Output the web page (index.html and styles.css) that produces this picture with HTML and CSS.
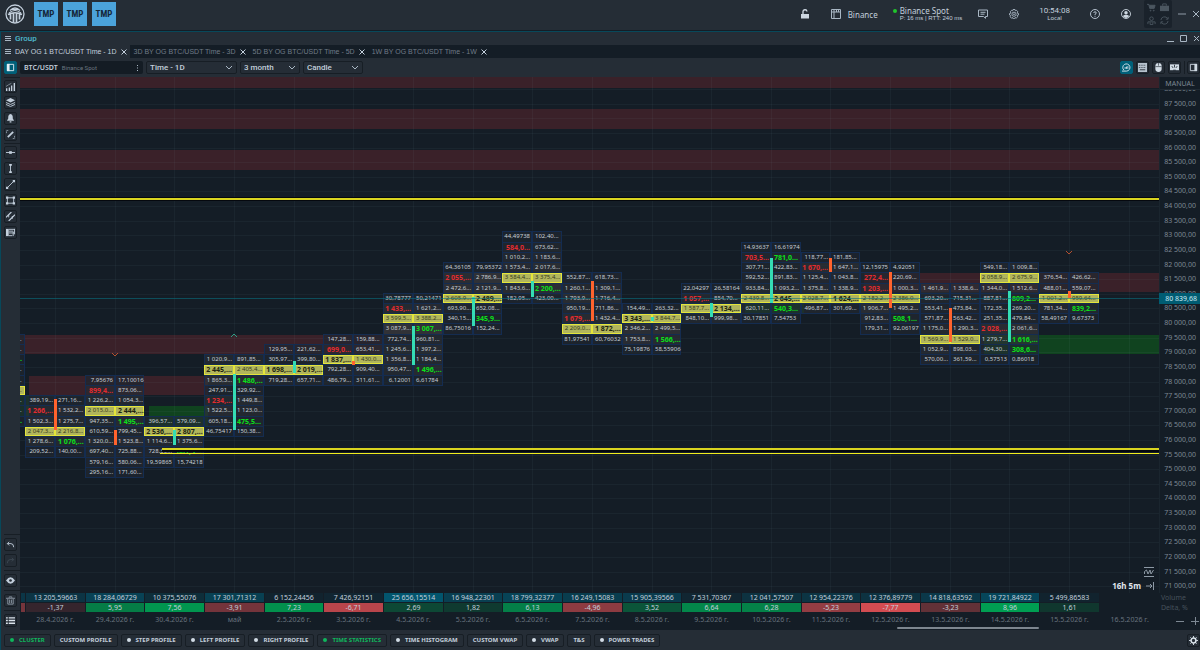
FILE: index.html
```html
<!DOCTYPE html>
<html lang="en">
<head>
    <meta charset="UTF-8">
    <meta name="viewport" content="width=device-width, initial-scale=1.0">
    <title>BTC/USDT Cluster Chart</title>
    <link rel="stylesheet" href="styles.css">
</head>
<body>

<!-- Top bar -->
<header class="topbar">
    <svg class="logo" viewBox="0 0 20 20" fill="none" stroke="#c3cfdc">
        <circle cx="10" cy="10" r="9" stroke-width="1.3"/>
        <path d="M5 6.5Q10 1.500 15 6.500M4 9Q10 4 16 9M6.500 5.500h7" stroke-width="1.2"/>
        <path d="M3 10.500Q10 7 17 10.500M5.500 10v5.500M8.500 9.500v8.500M11.500 9.500v8.500M14.500 10v5.500" stroke-width="1.7"/>
    </svg>
    <button class="tmp">TMP</button>
    <button class="tmp">TMP</button>
    <button class="tmp">TMP</button>
    <div class="topbar-right">
        <button class="top-icon" aria-label="Lock"><svg viewBox="0 0 10 10"><path d="M1 5h8v4.500H1z" fill="#ccd6e0"/><path d="M3 5V3a2 2 0 0 1 4-.5" fill="none" stroke="#ccd6e0" stroke-width="1.300"/></svg></button>
        <button class="exchange"><svg viewBox="0 0 10 10" fill="none" stroke="#a9b7c4"><path d="M.5.500h9v9h-9zM.5 3h9M3 .5v9M5.500.500v2.500M7.500.500v2.500"/></svg>Binance</button>
        <div class="connection">
            <span class="online"></span>
            <div><strong>Binance Spot</strong><small>P: 16 ms | RTT: 240 ms</small></div>
        </div>
        <button class="top-icon" aria-label="Messages"><svg viewBox="0 0 10 10" fill="none" stroke="#a9b7c4"><path d="M.5 1h9v6.500H7.500V9.300L5.500 7.500H.5zM2.500 3.300h5M2.500 5.200h4"/></svg></button>
        <button class="top-icon gear" aria-label="Settings"><svg viewBox="0 0 20 20" fill="none" stroke="#a9b7c4" stroke-width="1.8"><path d="M8 1h4l.7 2.500 2.500-.800 2.500 3L16 8l3 1v3l-3 1 1.500 2.500-3 2.500-2.200-1-.8 2.500H8l-.8-2.500-2.200 1-3-2.500L3.500 13 1 12V9l3-1-1.500-2.300 2.500-3 2.300.800z"/><circle cx="10" cy="10.500" r="4.200"/><circle cx="10" cy="10.500" r="1"/></svg></button>
        <div class="clock"><span>10:54:08</span><small>Local</small></div>
        <button class="top-icon" aria-label="Help"><svg viewBox="0 0 20 20" fill="none" stroke="#c3cfdc" stroke-width="1.8"><circle cx="10" cy="10" r="9"/><path d="M7.500 8q0-2.500 2.500-2.500T12.500 8q0 1.300-2.500 2.500v1.500M10 13.500v2"/></svg></button>
        <button class="top-icon" aria-label="Account"><svg viewBox="0 0 20 20"><circle cx="10" cy="10" r="9" fill="none" stroke="#ccd6e0" stroke-width="1.8"/><circle cx="10" cy="7.500" r="3.500" fill="#ccd6e0"/><path d="M3.500 14q6.500-5 13 0-6.500 8-13 0z" fill="#ccd6e0"/></svg></button>
        <div class="quick">
            <svg viewBox="0 0 10 10" fill="#4b5660" stroke="#4b5660"><path d="M0 1.500h2l1 4.500h5l1-3.500H2.500" /><circle cx="4" cy="8.500" r=".5"/><circle cx="7.500" cy="8.500" r=".5"/></svg>
            <svg viewBox="0 0 10 10" fill="#4b5660"><path d="M0 3h10v6H0z"/><path d="M3 3V1h4v2" fill="none" stroke="#4b5660"/></svg>
            <svg viewBox="0 0 10 10" fill="none" stroke="#4b5660"><circle cx="5" cy="3" r="2"/><path d="M1 9V6.500h8V9M3.500 7v2.500h3V7"/></svg>
            <svg viewBox="0 0 10 10" fill="none" stroke="#4b5660"><path d="M1 4.500A4 4 0 0 1 8.500 3M9 1v2.500H6.500M9 5.500A4 4 0 0 1 1.500 7M1 9V6.500h2.500"/></svg>
        </div>
        <button class="win" aria-label="Minimize"><svg viewBox="0 0 8 8" stroke="#909ba6"><path d="M0 4h8"/></svg></button>
        <button class="win" aria-label="Close"><svg viewBox="0 0 8 8" stroke="#a9b7c4"><path d="M1 1l6 6M7 1L1 7"/></svg></button>
    </div>
</header>

<main class="window">
    <div class="group-bar">
        <svg class="burger" viewBox="0 0 6 6" stroke="#a9b7c4"><path d="M0 .5h6M0 2.500h6M0 4.500h6"/></svg>
        <span class="group-name">Group</span>
        <button class="win-small" aria-label="Minimize group"><svg viewBox="0 0 7 7" stroke="#a9b7c4"><path d="M0 6.500h7"/></svg></button>
        <button class="win-small" aria-label="Maximize group"><svg viewBox="0 0 7 7" fill="none" stroke="#a9b7c4"><path d="M.5.500h6v6h-6z"/></svg></button>
        <button class="win-small" aria-label="Close group"><svg viewBox="0 0 7 7" stroke="#a9b7c4"><path d="M1 1l5 5M6 1L1 6"/></svg></button>
    </div>

    <nav class="tabs">
        <div class="tab active">
            <svg class="burger" viewBox="0 0 6 6" stroke="#a9b7c4"><path d="M0 .5h6M0 2.500h6M0 4.500h6"/></svg>
            <a href="#">DAY OG 1 BTC/USDT Time - 1D</a><button aria-label="Close tab"><svg viewBox="0 0 6 6"><path d="M.5.500l5 5M5.500.500l-5 5"/></svg></button>
        </div>
        <div class="tab"><a href="#">3D BY OG BTC/USDT Time - 3D</a><button aria-label="Close tab"><svg viewBox="0 0 6 6"><path d="M.5.500l5 5M5.500.500l-5 5"/></svg></button></div>
        <div class="tab"><a href="#">5D BY OG BTC/USDT Time - 5D</a><button aria-label="Close tab"><svg viewBox="0 0 6 6"><path d="M.5.500l5 5M5.500.500l-5 5"/></svg></button></div>
        <div class="tab"><a href="#">1W BY OG BTC/USDT Time - 1W</a><button aria-label="Close tab"><svg viewBox="0 0 6 6"><path d="M.5.500l5 5M5.500.500l-5 5"/></svg></button></div>
    </nav>

    <div class="toolbar">
        <button class="tool on" aria-label="Toggle left panel"><svg viewBox="0 0 10 10"><path d="M1.500 1.500h7v7h-7z" fill="none" stroke="#e3edf4"/><path d="M1 1h3v8H1z" fill="#e3edf4"/></svg></button>
        <button class="symbol"><strong>BTC/USDT</strong><span>Binance Spot</span><svg viewBox="0 0 2 8" fill="#a9b7c4"><path d="M0 1h1v1H0zM0 3.500h1v1H0zM0 6h1v1H0z"/></svg></button>
        <label class="pick pick-time"><select aria-label="Timeframe"><option>Time - 1D</option></select><svg viewBox="0 0 8 5"><path d="M1 1l3 3 3-3"/></svg></label>
        <label class="pick"><select aria-label="Period"><option>3 month</option></select><svg viewBox="0 0 8 5"><path d="M1 1l3 3 3-3"/></svg></label>
        <label class="pick"><select aria-label="Chart type"><option>Candle</option></select><svg viewBox="0 0 8 5"><path d="M1 1l3 3 3-3"/></svg></label>
        <div class="toolbar-right">
            <button class="tool on" aria-label="Inspect"><svg viewBox="0 0 10 10" fill="none" stroke="#dbe8ef"><path d="M2.200 8A4 4 0 1 1 5 9H0"/><path d="M3.500 6.500v-2M5 6.500V4M6.500 6.500v-3"/></svg></button>
            <button class="tool" aria-label="Keyboard"><svg viewBox="0 0 10 10"><path d="M0 0h10v10H0z" fill="#b6c2cd"/><path d="M1 2.500h8M1 5h8" stroke="#2b333c" stroke-dasharray="1 1"/><path d="M2 7.500h6" stroke="#2b333c"/></svg></button>
            <button class="tool" aria-label="Mouse"><svg viewBox="0 0 10 10"><rect x="1.500" y="0" width="7" height="10" rx="3.500" fill="#d2dce5"/><path d="M1.500 4h7M5 0v3" stroke="#252d36" stroke-width=".7"/></svg></button>
            <button class="tool" aria-label="Templates"><svg viewBox="0 0 10 10"><path d="M0 1.500h10v6.500H0z" fill="#d2dce5"/><path d="M2 3.500l1.500 2M5 2v3M8 3.500L6.500 5.500M3.500 8h3" stroke="#252d36"/></svg></button>
            <span class="split"></span>
            <button class="tool" aria-label="Toggle right panel"><svg viewBox="0 0 10 10"><path d="M1.500 1.500h7v7h-7z" fill="none" stroke="#d2dce5"/><path d="M6 1h3v8H6z" fill="#d2dce5"/></svg></button>
        </div>
    </div>

    <div class="workspace">
        <aside class="sidebar">
            <div class="tools tools-top">
                <button class="tool" aria-label="Indicators"><svg viewBox="0 0 10 10" fill="#c3cfdc"><path d="M0 7h1.500v3H0zM3 6h1.500v4H3zM5.500 4h1.500v6H5.500zM8.500 1H10v9H8.500z"/><path d="M0 5l3-2 3-1.500" fill="none" stroke="#7f8b96"/></svg></button>
                <button class="tool" aria-label="Layers"><svg viewBox="0 0 10 10"><path d="M5 0l5 2.500L5 5 0 2.500z" fill="#c3cfdc"/><path d="M0 5l5 2.200L10 5M0 7.200l5 2.200 5-2.200" fill="none" stroke="#c3cfdc"/></svg></button>
                <button class="tool" aria-label="Alerts"><svg viewBox="0 0 10 10" fill="#c3cfdc"><path d="M5 0q3 1 2.500 5L9 7.500H1L2.500 5Q2 1 5 0zM4 8h2v1.500H4z"/></svg></button>
                <button class="tool" aria-label="Drawing"><svg viewBox="0 0 10 10"><path d="M2 8l6-6" stroke="#c3cfdc" stroke-width="2"/><path d="M.5 3.500v-3h3M9.500 6.500v3h-3" fill="none" stroke="#8f9ba7" stroke-dasharray="2 1"/></svg></button>
            </div>
            <div class="tools tools-top">
                <button class="tool" aria-label="Horizontal line"><svg viewBox="0 0 10 10"><path d="M0 5h10" stroke="#c3cfdc"/><path d="M3.500 3.500h3v3h-3z" fill="#c3cfdc"/></svg></button>
                <button class="tool" aria-label="Vertical line"><svg viewBox="0 0 10 10"><path d="M5 1v8" stroke="#c3cfdc"/><path d="M3.500 0h3v2h-3zM3.500 8h3v2h-3z" fill="#c3cfdc"/></svg></button>
                <button class="tool" aria-label="Trend line"><svg viewBox="0 0 10 10"><path d="M2 8l6-6" stroke="#c3cfdc"/><path d="M0 7.500h2.500V10H0zM7.500 0H10v2.500H7.500z" fill="#c3cfdc"/></svg></button>
                <button class="tool" aria-label="Rectangle"><svg viewBox="0 0 10 10"><path d="M1.500 2h7v6h-7z" fill="none" stroke="#c3cfdc"/><path d="M0 .5h2.500V3H0zM7.500.500H10V3H7.500zM0 7h2.500v2.500H0zM7.500 7H10v2.500H7.500z" fill="#c3cfdc"/></svg></button>
                <button class="tool" aria-label="Channel"><svg viewBox="0 0 10 10" stroke="#c3cfdc"><path d="M0 6l6-6M3 10l7-7" stroke-width="1.300"/><path d="M3 3v3M7 4.500v3"/></svg></button>
                <button class="tool" aria-label="Profile"><svg viewBox="0 0 10 10"><path d="M0 1h3v8H0z" fill="#c3cfdc"/><path d="M3 1.500h7M3 3.500h5M3 5.500h6M3 8.500h4M8 4v5M9.500 1v6" stroke="#c3cfdc"/></svg></button>
            </div>
            <div class="tools tools-bottom">
                <button class="tool" aria-label="Undo"><svg viewBox="0 0 10 10"><path d="M3.500 2L1.500 4l2 2M1.500 4h4q3 0 3 4" fill="none" stroke="#c3cfdc"/></svg></button>
                <button class="tool" aria-label="Redo" disabled><svg viewBox="0 0 10 10"><path d="M6.500 2l2 2-2 2M8.500 4h-4q-3 0-3 4" fill="none" stroke="#3d4852"/></svg></button>
            </div>
            <div class="tools">
                <button class="tool" aria-label="Show drawings"><svg viewBox="0 0 10 10"><path d="M0 5q5-7 10 0-5 7-10 0z" fill="#c3cfdc"/><circle cx="5" cy="5" r="1.500" fill="#252d36"/></svg></button>
            </div>
            <div class="tools">
                <button class="tool" aria-label="Delete"><svg viewBox="0 0 10 10" fill="none" stroke="#8f9ba7"><path d="M0 2.500h10M3.500 2V1h3v1M2 3v6h6V3M4 4v4M6 4v4"/></svg></button>
            </div>
            <div class="tools">
                <button class="tool" aria-label="List"><svg viewBox="0 0 10 10" stroke="#dbe4ec"><path d="M0 2h2M3 2h7M0 5h2M3 5h7M0 8h2M3 8h7" stroke-width="1.500"/></svg></button>
            </div>
        </aside>

        <section class="chart">
            <div class="plot" id="plot">
                <svg id="plot-svg"></svg>
                <button class="manual">MANUAL</button>
                <div class="countdown">
                    <svg viewBox="0 0 10 10" fill="none" stroke="#8d99a5"><path d="M0 .5h10M0 9.500h10M.5 7V4.500L2.500 3l1.500 4 2-4 1 4 2.500-4"/></svg>
                    <div>16h 5m<svg viewBox="0 0 8 8" fill="none" stroke="#8d99a5"><path d="M0 4h6M4 2l2 2-2 2M7.500 0v8"/></svg></div>
                </div>
            </div>
            <div class="stats">
                <table id="stats"></table>
                <div class="stats-names"><span>Volume</span><span>Delta, %</span></div>
            </div>
            <div class="time-axis">
                <div class="scrollbar"></div>
                <div class="scale">
                    <button aria-label="Zoom out"><svg viewBox="0 0 8 8"><path d="M0 4.500h8"/></svg></button>
                    <button aria-label="Zoom in"><svg viewBox="0 0 8 8"><path d="M0 4.500h8M4.500 0v8"/></svg></button>
                </div>
            </div>
        </section>
    </div>

    <footer class="modes">
        <button class="on"><i></i>CLUSTER</button>
        <button>CUSTOM PROFILE</button>
        <button><i></i>STEP PROFILE</button>
        <button><i></i>LEFT PROFILE</button>
        <button><i></i>RIGHT PROFILE</button>
        <button class="on"><i></i>TIME STATISTICS</button>
        <button><i></i>TIME HISTOGRAM</button>
        <button>CUSTOM VWAP</button>
        <button><i></i>VWAP</button>
        <button>T&amp;S</button>
        <button><i></i>POWER TRADES</button>
        <button class="tool modes-settings" aria-label="Mode settings"><svg viewBox="0 0 10 10" fill="none" stroke="#dbe4ec"><circle cx="5" cy="5" r="2.700" stroke-width="1.700"/><path d="M5 0v2M5 8v2M0 5h2M8 5h2M1.500 1.500l1.200 1.200M7.300 7.300l1.200 1.200M8.500 1.500L7.300 2.700M2.700 7.300L1.500 8.500"/></svg></button>
    </footer>
</main>

<script src="chart.js"></script>
</body>
</html>
```
FILE: styles.css
```css
/* Reset Styles */
* {
    margin: 0;
    padding: 0;
    box-sizing: border-box;
}

body {
    font-family: "Noto Sans", "Open Sans", sans-serif;
    font-size: 8px;
    color: #c3cfdc;
    background: #141d26;
    display: flex;
    flex-direction: column;
    height: 100vh;
    overflow: hidden;
}

button {
    font: inherit;
    color: inherit;
    background: none;
    border: none;
    cursor: pointer;
}

a {
    color: inherit;
    text-decoration: none;
}

svg {
    display: block;
}

/* Top bar */
.topbar {
    display: flex;
    align-items: center;
    gap: 5px;
    height: 30px;
    padding-left: 5px;
    background: #252d36;
    flex: none;
}

.logo {
    width: 20px;
    height: 20px;
    margin: 0 4px 2px 0;
}

.tmp {
    width: 24px;
    height: 24px;
    margin-bottom: 2px;
    background: #4ba3db;
    color: #15283a;
    font-family: "Liberation Sans Narrow", "Roboto Condensed", Roboto, sans-serif;
    font-size: 9px;
    font-weight: 700;
}

.topbar-right {
    display: flex;
    align-items: center;
    margin: 0 0 2px auto;
    height: 28px;
    white-space: nowrap;
}

.top-icon {
    width: 10px;
    margin-right: 21px;
}

.gear {
    margin-right: 20px;
}

.exchange {
    display: flex;
    align-items: center;
    gap: 7px;
    margin-right: 15px;
}

.exchange svg {
    width: 10px;
}

.connection {
    display: flex;
    gap: 3px;
    margin-right: 16px;
    line-height: 9px;
}

.connection strong,
.connection small,
.clock span,
.clock small {
    display: block;
}

.connection strong {
    font-size: 8px;
    font-weight: 400;
}

.connection small {
    font-family: "Liberation Sans", Arial, sans-serif;
    font-size: 6px;
    line-height: 7px;
}

.online {
    width: 4px;
    height: 4px;
    margin-top: 3px;
    border-radius: 50%;
    background: #20c52c;
}

.clock {
    margin-right: 20px;
    text-align: center;
    line-height: 8px;
}

.clock span {
    font-family: Roboto, sans-serif;
}

.clock small {
    font-size: 6px;
    line-height: 7px;
}

.quick {
    display: grid;
    grid-template-columns: 9px 9px;
    gap: 4px;
    padding: 3px;
    margin-left: -8px;
    border-radius: 2px;
    background: #1a222b;
}

.win {
    width: 8px;
    margin-left: 6px;
}

/* Group window */
.window {
    display: flex;
    flex-direction: column;
    flex: 1;
    min-height: 0;
    margin-top: 1px;
    border-top: 1px solid #07485a;
    border-left: 1px solid #07485a;
    background: #252d36;
}

.group-bar {
    display: flex;
    align-items: center;
    gap: 4px;
    height: 13px;
    padding-left: 4px;
}

.burger {
    width: 6px;
    height: 6px;
    flex: none;
}

.group-name {
    color: #4fbbcf;
    font-family: Roboto, sans-serif;
    font-weight: 500;
    margin-right: auto;
}

.win-small {
    width: 7px;
    margin-left: 2px;
}

.tabs {
    display: flex;
    height: 13px;
    background: #141d26;
    font-family: "Liberation Sans", Arial, sans-serif;
    font-size: 7px;
    white-space: nowrap;
}

.tab {
    display: flex;
    align-items: center;
    gap: 4px;
    padding: 0 3px 0 4px;
    color: #707b86;
}

.tab.active {
    background: #252d36;
    color: #c3cfdc;
}

.tab button {
    width: 6px;
}

.tab button svg {
    stroke: #c3cfdc;
}

/* Toolbar */
.toolbar {
    display: flex;
    align-items: center;
    gap: 3px;
    height: 19px;
    padding-left: 3px;
}

.tool {
    display: flex;
    align-items: center;
    justify-content: center;
    width: 13px;
    height: 13px;
    padding: 1px;
    border: 1px solid #171e25;
    border-radius: 2px;
    flex: none;
}

.tool svg {
    width: 9px;
    height: 9px;
}

.tool.on {
    background: #006079;
    border-color: #006079;
}

.symbol {
    display: flex;
    align-items: center;
    gap: 4px;
    width: 123px;
    height: 13px;
    padding: 0 4px;
    border-radius: 2px;
    background: #141c24;
    font-size: 7px;
}

.symbol strong {
    font-weight: 600;
}

.symbol span {
    font-family: Roboto, sans-serif;
    font-size: 6px;
    color: #6b7680;
}

.symbol svg {
    width: 2px;
    height: 8px;
    margin-left: auto;
}

.pick {
    display: flex;
    align-items: center;
    width: 60px;
    height: 13px;
    padding: 0 3px;
    border: 1px solid #171e25;
    border-radius: 2px;
}

.pick-time {
    width: 91px;
}

.pick select {
    flex: 1;
    min-width: 0;
    appearance: none;
    border: none;
    background: none;
    color: #c3cfdc;
    font: 500 8px Roboto, sans-serif;
}

.pick svg {
    width: 8px;
    height: 5px;
    fill: none;
    stroke: #a9b7c4;
}

.toolbar-right {
    display: flex;
    gap: 3px;
    margin-left: auto;
}

.split {
    width: 1px;
    margin: 0 -1px 0 0;
    background: #171e25;
}

/* Workspace */
.workspace {
    display: flex;
    flex: 1;
    min-height: 0;
}

.sidebar {
    display: flex;
    flex-direction: column;
    width: 19px;
    padding-left: 3px;
    flex: none;
}

.tools {
    display: flex;
    flex-direction: column;
    gap: 3px;
    padding: 3px 0;
    border-top: 1px solid #171e25;
}

.tools-top {
    padding: 2px 0;
}

.tools-bottom {
    margin-top: auto;
}

.chart {
    display: flex;
    flex-direction: column;
    flex: 1;
    min-width: 0;
    background: #141d26;
}

.plot {
    position: relative;
    flex: 1;
    min-height: 0;
    overflow: hidden;
}

#plot-svg {
    width: 100%;
    height: 100%;
    font-size: 6px;
}

.manual {
    position: absolute;
    top: 0;
    right: 0;
    width: 40px;
    height: 13px;
    border-bottom: 1px solid #202a33;
    background: #141d26;
    color: #7d8893;
    font-size: 7px;
}

.countdown {
    position: absolute;
    right: 46px;
    bottom: 2px;
    display: flex;
    flex-direction: column;
    align-items: flex-end;
    gap: 3px;
    font-weight: 700;
    color: #e0e7ee;
}

.countdown svg {
    width: 10px;
}

.countdown div {
    display: flex;
    align-items: center;
    gap: 5px;
}

.countdown div svg {
    width: 8px;
}

/* Chart shapes */
.grid {
    stroke: #8fb0c0;
    stroke-opacity: 0.06;
}

.zone-red {
    fill: #3a2129;
}

.zone-green {
    fill: #10431f;
}

.cell {
    stroke: #142c50;
}

.cell-poc {
    fill: #b1b55c;
    stroke: #e4e53a;
}

.volume {
    fill: #c6ced6;
}

.volume-poc {
    fill: #34391d;
}

.volume-sell,
.volume-buy,
.volume-max {
    font-size: 7px;
    font-weight: 700;
}

.volume-sell {
    fill: #e32b30;
}

.volume-buy {
    fill: #0be01b;
}

.volume-max {
    fill: #20240f;
}

.candle-up {
    fill: #35dcb4;
}

.candle-down {
    fill: #ff632d;
}

.level-edge {
    stroke: #05080f;
    stroke-width: 4;
}

.level {
    stroke: #d9d420;
    stroke-width: 2;
}

.level-thin {
    stroke: #f0ec1e;
    stroke-width: 1;
}

.price {
    fill: #7d8893;
    font-size: 7px;
}

.price-line {
    stroke: #08707f;
    stroke-opacity: 0.6;
}

.price-tag {
    fill: #005c72;
}

.price-now {
    fill: #b5dce5;
    font-size: 7px;
    font-weight: 500;
}

.mark {
    fill: none;
}

.mark-up {
    stroke: #2c9f86;
}

.mark-down {
    stroke: #b4502f;
}

/* Time statistics */
.stats {
    display: flex;
    align-items: flex-start;
    height: 37px;
    overflow: hidden;
}

.stats table {
    table-layout: fixed;
    border-collapse: collapse;
    flex: none;
}

.stats td,
.stats th {
    height: 9px;
    font-size: 7px;
    font-weight: 400;
    line-height: 9px;
    text-align: center;
    white-space: nowrap;
    overflow: hidden;
    border-left: 1px solid #141d26;
}

.stats tr + tr td {
    border-top: 1px solid #141d26;
}

.stats th {
    height: 14px;
    color: #68737e;
}

.stats-names {
    display: flex;
    flex-direction: column;
    width: 39px;
    margin-left: auto;
    font-size: 7px;
    line-height: 10px;
    color: #46515b;
    background: #141d26;
    z-index: 1;
}

.time-axis {
    display: flex;
    align-items: flex-end;
    height: 14px;
    margin-top: -14px;
    z-index: 2;
}

.scrollbar {
    width: 12%;
    height: 2px;
    margin: 0 137px 1px auto;
    border-radius: 1px;
    background: #7d868f;
}

.scale {
    display: flex;
    gap: 7px;
    padding: 0 1px 5px 0;
}

.scale button {
    width: 8px;
}

.scale svg {
    stroke: #7d8893;
}

/* Chart modes */
.modes {
    display: flex;
    align-items: center;
    gap: 3px;
    height: 20px;
    padding-left: 3px;
    font-size: 6px;
    font-weight: 700;
    white-space: nowrap;
}

.modes button {
    display: flex;
    align-items: center;
    gap: 5px;
    height: 13px;
    padding: 0 5px;
    border: 1px solid #171e25;
    border-radius: 2px;
}

.modes i {
    width: 4px;
    height: 4px;
    border-radius: 50%;
    background: #d2dce5;
}

.modes .on {
    color: #0fb65c;
}

.modes .on i {
    background: #0fb65c;
}

.modes .modes-settings {
    margin-left: auto;
    padding: 1px;
}
```
FILE: chart.js
```javascript
// Scale: top of the plot, price units per pixel, width of one day
const TOP_PRICE = 88415;
const UNITS = 34.2;
const DAY = 59.65;
const FIRST = 35;
const AXIS = 41;
const LAST_PRICE = 80839.68;

// Each row of a cluster is 350 wide in price, row 0 starts here
const ROW_TOP = 83135;
const ROW_STEP = 350;

// "*" marks the strongest imbalance, "^" the larger side, "#" the row with the most volume
const clusters = [
    { row: 16, open: 77403, close: 76343, cells: '389,19...|271,16...;*1 266,...|1 532,2...;1 502,3...|1 275,7...;#2 047,3...|2 216,8...;1 278,6...|*1 076,...;209,52...|140,00...' },
    { row: 14, open: 76343, close: 75830, cells: '7,95676|17,10016;*899,4...|873,06...;1 226,2...|1 054,3...;#2 015,0...|^2 444,...;947,35...|*1 495,...;610,59...|799,45...;1 320,0...|1 523,8...;697,40...|725,88...;579,16...|580,06...;295,16...|171,60...' },
    { row: 18, open: 75830, close: 76343, cells: '396,57...|579,09...;#^2 536,...|^2 807,...;1 114,6...|1 375,6...;728,30...|*801,3...;19,59865|15,74218' },
    { row: 12, open: 76343, close: 78258, cells: '1 020,9...|891,85...;#^2 445,...|2 405,4...;1 865,3...|*1 486,...;247,91...|329,92...;*1 234,...|1 449,8...;1 522,5...|1 123,0...;605,18...|*475,5...;46,75417|150,38...' },
    { row: 11, open: 78292, close: 78703, cells: '129,95...|221,62...;305,97...|399,80...;#^1 698,...|^2 019,...;719,28...|657,71...' },
    { row: 10, open: 78703, close: 78566, cells: '147,28...|159,88...;*699,0...|653,41...;#^1 837,...|1 430,0...;792,28...|909,40...;486,79...|311,61...' },
    { row: 6, open: 78566, close: 79900, cells: '30,78777|50,21471;*1 433,...|1 621,2...;#3 599,5...|3 388,2...;3 087,9...|*3 067,...;772,74...|960,81...;1 245,6...|1 397,2...;1 356,8...|1 184,4...;950,47...|*1 496,...;6,12001|6,61784' },
    { row: 3, open: 79900, close: 80891, cells: '64,36105|79,95372;*2 055,...|2 786,9...;2 472,6...|2 121,9...;#2 605,9...|^2 489,...;693,90...|652,08...;340,15...|*345,9...;86,75016|152,24...' },
    { row: 0, open: 80891, close: 81439, cells: '44,49738|102,40...;*584,0...|673,62...;1 010,2...|1 183,6...;1 573,4...|2 017,6...;#3 584,4...|3 375,4...;1 843,6...|*2 200,...;182,95...|423,00...' },
    { row: 4, open: 81439, close: 80071, cells: '552,87...|618,73...;1 260,1...|1 309,1...;1 793,9...|1 716,4...;950,19...|711,86...;*1 679,...|1 432,4...;#2 209,0...|^1 872,...;81,97541|60,76032' },
    { row: 7, open: 80071, close: 80207, cells: '154,49...|263,32...;#^3 343,...|3 844,7...;2 346,2...|2 499,5...;1 753,8...|*1 566,...;75,19876|58,55906' },
    { row: 5, open: 80207, close: 80686, cells: '22,04297|26,58164;*1 057,...|854,70...;#1 587,7...|^2 134,...;848,10...|999,98...' },
    { row: 1, open: 80686, close: 82225, cells: '14,93637|16,61974;*703,5...|*781,0...;307,71...|422,83...;592,52...|891,83...;933,84...|1 093,2...;#2 439,8...|^2 645,...;620,11...|*540,3...;30,17851|7,54753' },
    { row: 2, open: 82225, close: 81746, cells: '118,77...|181,85...;*1 670,...|1 647,1...;1 125,4...|1 043,8...;1 375,8...|1 338,9...;#2 028,7...|^1 624,...;496,87...|301,69...' },
    { row: 3, open: 81746, close: 80515, cells: '12,15975|4,92051;*272,4...|220,69...;*1 203,...|1 000,3...;#2 182,2...|2 386,0...;1 906,7...|1 495,2...;912,83...|*508,1...;179,31...|92,06197' },
    { row: 5, open: 80515, close: 79352, cells: '1 461,9...|1 338,6...;693,20...|715,31...;553,41...|473,84...;571,87...|563,42...;1 175,0...|1 290,3...;#1 569,9...|1 529,0...;1 052,9...|898,03...;570,00...|361,59...' },
    { row: 3, open: 79352, close: 81096, cells: '549,18...|1 009,8...;#2 058,9...|2 675,9...;1 344,0...|1 512,6...;887,81...|*809,2...;172,35...|269,20...;251,35...|479,84...;*2 028,...|2 061,6...;1 279,7...|*1 616,...;404,30...|*308,6...;0,57513|0,86018' },
    { row: 4, open: 81096, close: 80840, cells: '376,54...|426,62...;488,01...|559,07...;#1 001,2...|959,64...;781,34...|*839,2...;58,49167|9,67373' }
];

// The day cut off by the left edge, only the tails of its values are in view
const previous = { row: 10, cells: '|;|;|;|;|;#|;|;|;|' };
const tails = ['volume', 'volume', 'volume-buy', 'volume', 'volume', 'volume-poc', 'volume', 'volume', 'volume-buy'];

// from / to are in days, counted from the first column's centre; null runs to the edge
const zones = [
    { type: 'red', high: 88415, low: 88040, from: null, to: null },
    { type: 'red', high: 87320, low: 86640, from: null, to: null },
    { type: 'red', high: 85920, low: 85250, from: null, to: null },
    { type: 'red', high: 79590, low: 78940, from: null, to: 5.5 },
    { type: 'red', high: 78190, low: 77540, from: -0.43, to: 2.56 },
    { type: 'green', high: 77510, low: 76800, from: null, to: -0.43 },
    { type: 'green', high: 77160, low: 76480, from: 1.57, to: 2.56 },
    { type: 'green', high: 80700, low: 80340, from: 11.57, to: 12.56 },
    { type: 'red', high: 81710, low: 81050, from: 13.57, to: null },
    { type: 'green', high: 79590, low: 78940, from: 15.57, to: null }
];

const days = [
    ['28.4.2026 г.', '13 205,59663', '-1,37'],
    ['29.4.2026 г.', '18 284,06729', '5,95'],
    ['30.4.2026 г.', '10 375,55076', '7,56'],
    ['май', '17 301,71312', '-3,91'],
    ['2.5.2026 г.', '6 152,24456', '7,23'],
    ['3.5.2026 г.', '7 426,92151', '-6,71'],
    ['4.5.2026 г.', '25 656,15514', '2,69'],
    ['5.5.2026 г.', '16 948,22301', '1,82'],
    ['6.5.2026 г.', '18 799,32377', '6,13'],
    ['7.5.2026 г.', '16 249,15083', '-4,96'],
    ['8.5.2026 г.', '15 905,39566', '3,52'],
    ['9.5.2026 г.', '7 531,70367', '6,64'],
    ['10.5.2026 г.', '12 041,57507', '6,28'],
    ['11.5.2026 г.', '12 954,22376', '-5,23'],
    ['12.5.2026 г.', '12 376,89779', '-7,77'],
    ['13.5.2026 г.', '14 818,63592', '-3,23'],
    ['14.5.2026 г.', '19 721,84922', '8,96'],
    ['15.5.2026 г.', '5 499,86583', '1,61'],
    ['16.5.2026 г.', '', '']
];

const plot = document.getElementById('plot');
const svg = document.getElementById('plot-svg');

const priceY = price => Math.round((TOP_PRICE - price) / UNITS);
const dayX = day => Math.round(FIRST + day * DAY);
const toNumber = text => parseFloat(text.replace(/[^\d,]/g, '').replace(',', '.')) || 0;

function rect(cls, x, y, width, height, fill) {
    return `<rect class="${cls}" x="${x}" y="${y}" width="${width}" height="${height}"${fill ? ` fill="${fill}"` : ''}/>`;
}

function line(cls, x1, y1, x2, y2) {
    return `<path class="${cls}" d="M${x1} ${y1}L${x2} ${y2}"/>`;
}

function drawCell(text, side, poc, x, y, width, height) {
    const strong = text[0] === '*';
    const max = text[0] === '^';
    const value = text.replace(/[*^]/, '');
    // Heavier rows get a greyer background
    const grey = Math.min(toNumber(value) / 40000, 0.08);
    let cls = poc ? 'volume-poc' : 'volume';
    if (strong) cls = side === 'bid' ? 'volume-sell' : 'volume-buy';
    if (max) cls += ' volume-max';
    const textX = side === 'bid' ? x + width - 2 : x + 3;
    const textY = strong || max ? y + 8 : y + 7;
    const box = poc
        ? rect('cell-poc', x + 0.5, y + 1.5, width - 1, height - 2)
        : rect('cell', x + 0.5, y + 0.5, width - 1, height, `rgba(${30 + grey * 400}, ${38 + grey * 280}, ${47 + grey * 200}, 0.7)`);
    if (!value) return box;
    return box + `<text class="${cls}" x="${textX}" y="${textY}" text-anchor="${side === 'bid' ? 'end' : 'start'}">${value}</text>`;
}

function drawCluster(cluster, day) {
    const left = dayX(day - 0.5);
    const mid = dayX(day);
    const right = dayX(day + 0.5);
    let out = '';
    cluster.cells.split(';').forEach((pair, i) => {
        const y = priceY(ROW_TOP - (cluster.row + i) * ROW_STEP);
        const bottom = priceY(ROW_TOP - (cluster.row + i + 1) * ROW_STEP);
        const poc = pair[0] === '#';
        const [bid, ask] = pair.replace('#', '').split('|');
        out += drawCell(bid, 'bid', poc, left, y, mid - left, bottom - y);
        out += drawCell(ask, 'ask', poc, mid, y, right - mid, bottom - y);
    });
    if (cluster.open) {
        const top = priceY(Math.max(cluster.open, cluster.close));
        const bottom = priceY(Math.min(cluster.open, cluster.close));
        out += rect(cluster.close > cluster.open ? 'candle-up' : 'candle-down', mid - 1, top, 3, bottom - top);
    }
    return out;
}

function drawPlot() {
    const height = plot.clientHeight;
    const full = plot.clientWidth;
    const width = full - AXIS;
    let out = '';

    zones.forEach(z => {
        const x = z.from === null ? 0 : dayX(z.from);
        const end = z.to === null ? width : dayX(z.to);
        out += rect('zone-' + z.type, x, priceY(z.high), end - x, priceY(z.low) - priceY(z.high));
    });

    for (let day = 0; dayX(day) < width; day++) {
        out += line('grid', dayX(day) + 0.5, 0, dayX(day) + 0.5, height);
    }
    for (let price = 88000; priceY(price) < height; price -= 500) {
        const y = priceY(price);
        const label = String(price).replace(/(\d{3})$/, ' $1') + ',00';
        out += line('grid', 0, y + 0.5, width, y + 0.5);
        out += `<text class="price" x="${full - 4}" y="${y + 2}" text-anchor="end">${label}</text>`;
    }
    out += line('grid', width + 0.5, 0, width + 0.5, height);

    out += drawCluster(previous, -1);
    tails.forEach((cls, i) => {
        const y = priceY(ROW_TOP - (previous.row + i) * ROW_STEP) + 7;
        out += `<text class="${cls}" x="0" y="${y}">.</text>`;
    });
    clusters.forEach((cluster, day) => {
        out += drawCluster(cluster, day);
    });

    // Horizontal levels
    out += line('level-edge', 0, 122, width, 122) + line('level', 0, 122, width, 122);
    out += line('level-edge', 142, 373, width, 373) + line('level', 142, 372, width, 372);
    out += line('level-thin', 140, 376.5, width, 376.5);

    // Current price
    const now = priceY(LAST_PRICE);
    out += line('price-line', 0, now - 0.5, width, now - 0.5);
    out += rect('price-tag', width, now - 6, AXIS, 11);
    out += `<text class="price-now" x="${full - 3}" y="${now + 2}" text-anchor="end">80 839,68</text>`;

    // Signals
    [[1, 78960, 'down'], [3, 79540, 'up'], [17, 82460, 'down']].forEach(([day, price, type]) => {
        const x = dayX(day);
        const y = priceY(price);
        const tip = type === 'up' ? -3 : 3;
        out += `<path class="mark mark-${type}" d="M${x - 3} ${y}l3 ${tip}l3 ${-tip}"/>`;
    });

    svg.innerHTML = out;
}

function volumeColor(text) {
    return `rgba(0, 92, 118, ${Math.max(0.1, (toNumber(text) - 4000) / 24000)})`;
}

function deltaColor(text) {
    const strength = Math.min(toNumber(text) / 8, 1);
    return text[0] === '-' ? `rgba(216, 78, 82, ${strength})` : `rgba(0, 158, 82, ${strength})`;
}

function drawStats() {
    const widths = [dayX(-0.5)].concat(days.map((d, i) => dayX(i + 0.5) - dayX(i - 0.5)));
    const total = widths.reduce((a, b) => a + b, 0);
    const cell = (text, color) => `<td${text ? ` style="background: ${color(text)}"` : ''}>${text}</td>`;
    const table = document.getElementById('stats');
    table.style.width = total + 'px';
    table.innerHTML =
        '<colgroup>' + widths.map(w => `<col style="width: ${w}px">`).join('') + '</colgroup>' +
        `<tbody><tr><td style="background: ${volumeColor('14000')}"></td>` + days.map(d => cell(d[1], volumeColor)).join('') + '</tr>' +
        `<tr><td style="background: ${deltaColor('-4')}"></td>` + days.map(d => cell(d[2], deltaColor)).join('') + '</tr>' +
        '<tr><td></td>' + days.map(d => `<th scope="col">${d[0]}</th>`).join('') + '</tr></tbody>';
}

drawPlot();
drawStats();
window.addEventListener('resize', drawPlot);
```
